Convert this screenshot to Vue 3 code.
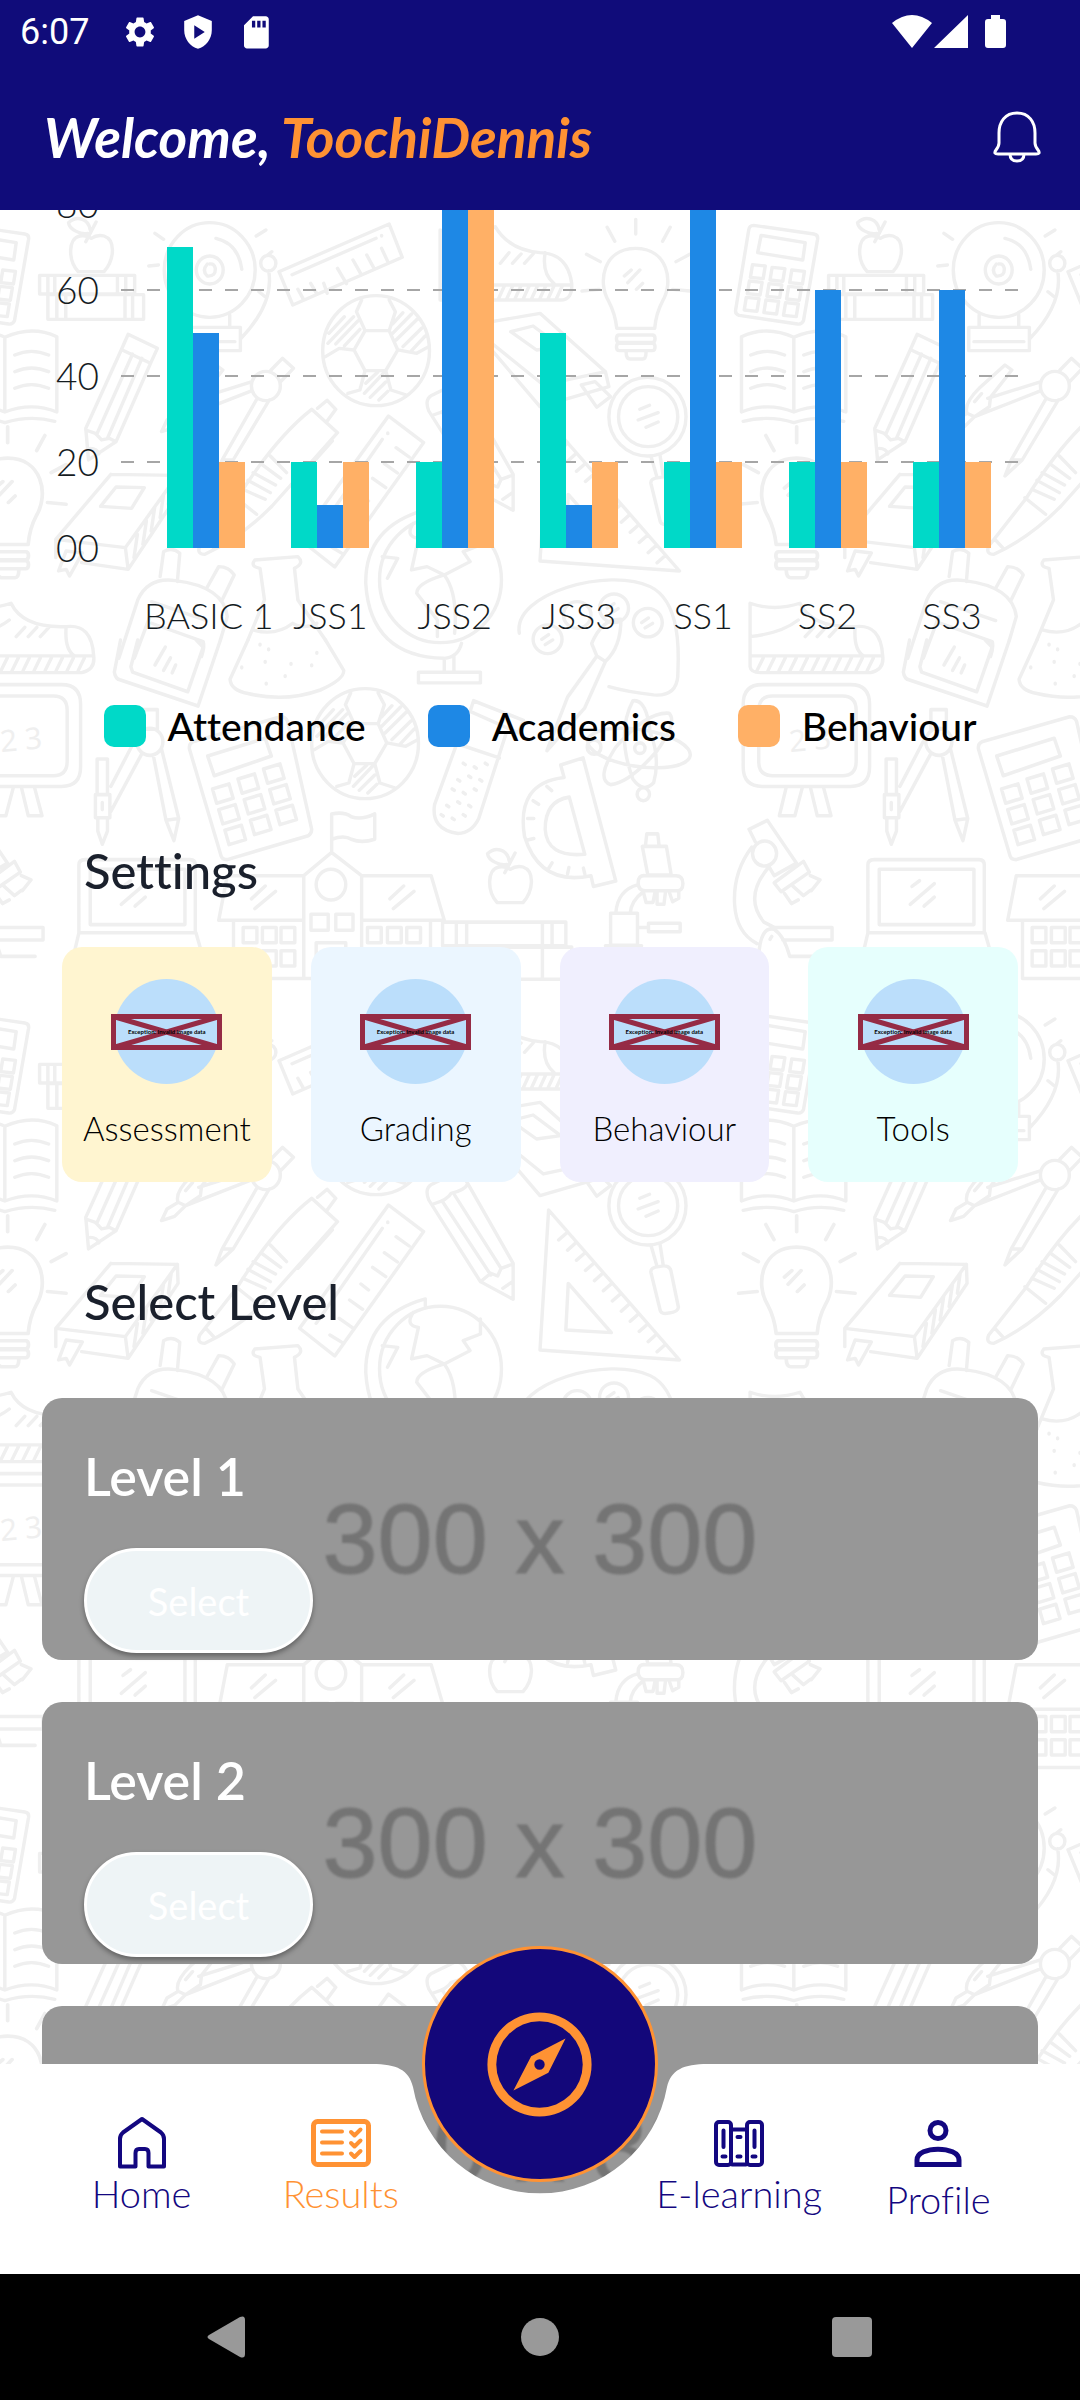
<script setup>
const ticks = ['80', '60', '40', '20', '00']
const maxValue = 80

const classes = [
  { name: 'BASIC 1', scores: [70, 50, 20] },
  { name: 'JSS1', scores: [20, 10, 20] },
  { name: 'JSS2', scores: [20, 80, 80] },
  { name: 'JSS3', scores: [50, 10, 20] },
  { name: 'SS1', scores: [20, 80, 20] },
  { name: 'SS2', scores: [20, 60, 20] },
  { name: 'SS3', scores: [20, 60, 20] },
]

const series = [
  { name: 'Attendance', tone: 'teal' },
  { name: 'Academics', tone: 'blue' },
  { name: 'Behaviour', tone: 'peach' },
]

const settings = [
  { name: 'Assessment', tone: 'cream' },
  { name: 'Grading', tone: 'sky' },
  { name: 'Behaviour', tone: 'lilac' },
  { name: 'Tools', tone: 'mint' },
]

const levels = [{ name: 'Level 1' }, { name: 'Level 2' }, { name: '' }]

// Wallpaper: one tile of school doodles, repeated in both directions.
const tileSize = 789
const tiles = []
for (let row = -1; row <= 2; row++) {
  for (let col = -1; col <= 1; col++) {
    tiles.push({ x: col * tileSize, y: row * tileSize })
  }
}

const steps = (count, make) => Array.from({ length: count }, (_, i) => make(i)).join(' ')
const grid3 = (make) => steps(9, (i) => make(i % 3, Math.floor(i / 3)))

const bulb =
  'M223 385Q218 340 200 305C165 245 185 145 278 145C370 145 390 245 355 305Q337 340 333 385Z M230 405h96q8 0 8 11t-8 11h-96q-8 0-8-11t8-11z M230 430h96q8 0 8 11t-8 11h-96q-8 0-8-11t8-11z M250 455q0 22 12 22h36q10 0 10-22 M278 58v44 M195 82l22 42 M378 82l-22 42 M135 163l40 22 M435 163l-40 22 M122 273l50-5 M435 273l-50-5 M245 228l20-18 M255 248l35-38 M280 268l18-18'
const apple =
  'M950 215C920 180 920 115 955 108Q975 105 988 115Q1005 103 1025 108C1060 120 1055 180 1025 215Z M972 125Q990 90 1002 66 M978 100C960 105 925 90 922 68C945 45 980 55 985 90'
const ball =
  'M937 452a155 165 0 1 0 310 0a155 165 0 1 0-310 0 M1060 392H1130L1155 450L1120 512H1060L1028 450Z M1060 392L1035 335L1050 300 M1130 392L1148 335L1130 300 M1155 450L1210 460L1245 440 M1120 512L1135 570L1180 585 M1060 512L1045 570L1010 580 M1028 450L985 445L945 470 M955 400l45-50 M952 430l75-80 M975 432l65-70 M1000 438l45-50 M1140 372l30-34 M1140 400l55-58 M1150 420l65-66 M1170 440l55-56 M1195 452l40-44 M1062 550l35-34 M1058 580l55-60 M1075 592l45-46 M1100 600l26-26'

const upper = [
  bulb,
  'M620 76L795 102Q808 104 806 118L765 362Q760 374 748 372L578 346Q566 342 568 330L606 90Q608 76 620 76Z M642 106L770 128L763 180L632 158Z ' +
    grid3((c, r) => `M${617 + c * 57 - r * 9} ${194 + c * 8 + r * 49}l37 4l-6 38l-37-4z`),
  apple,
  'M838 226h276v56h-276z M862 226v56 M882 226v56 M1064 226v56 M1088 226v56 M862 284h278v74h-278z M888 284v74 M914 284v74 M1086 284v74 M1108 284v74',
  'M1200 210a132 142 0 1 0 264 0a132 142 0 1 0-264 0 M1293 210a39 42 0 1 0 78 0a39 42 0 1 0-78 0 M1325 192Q1308 212 1325 228Q1350 230 1348 205Q1345 190 1332 192 M1350 115Q1415 130 1425 208 M1275 345v36 M1390 345v36 M1245 382h176v70h-176z M1260 425h145 M1423 415Q1520 310 1503 212 M1480 190a22 24 0 1 0 44 0a22 24 0 1 0-44 0 M1500 165l12-10 M1173 100l25 18 M1495 90l-28 18 M1155 198l28-3 M1475 275l18 15',
  'M585 410Q660 375 737 412Q815 375 888 410V636Q815 605 737 636Q660 605 585 636Z M737 412V636 M590 664Q665 645 737 668Q810 645 882 664 ' +
    steps(6, (i) => `M${612 + (i % 2) * 154} ${465 + Math.floor(i / 2) * 50}q48-22 98 0`),
  'M1095 403L1180 445L1160 490L1060 725L980 780L972 685L1075 450Z M1078 450L1160 490 M1108 462L1005 700 M1135 475L1035 715 M972 690L1000 700L1018 720L1040 715L1060 725 M985 745Q1005 745 1010 762',
  'M1453 558a42 44 0 1 0 84 0a42 44 0 1 0-84 0 M1510 510L1543 475L1575 505L1538 545 M1455 545L1300 595 M1455 572L1262 650 M1350 495L1370 510L1308 592L1305 620L1262 650L1240 640Q1230 610 1275 565Z M1240 640L1208 660L1192 695L1230 682L1262 650 M1262 605l20-24 M1470 595L1368 780L1350 828L1400 780L1505 600 M1368 780L1400 780',
  'M200 650a112 118 0 1 0 224 0a112 118 0 1 0-224 0 M228 650a86 90 0 1 0 172 0a86 90 0 1 0-172 0 M322 768l18 65 M348 762l10 68 M322 850Q320 835 345 833Q375 825 380 845L402 955Q400 970 375 972Q350 978 348 960Z M290 628l28-12 M285 660l58-22 M308 682l35-16',
  'M-290 90Q-180 120-130 80Q-90 150 0 158Q80 160 92 250Q95 300 60 300H-290Z M-290 255H88 M15 158Q5 220 40 250 M-115 190l25-32 M-80 190l25-28 M-45 190l25-28 ' +
    steps(8, (i) => `M${-120 + i * 24} 295l16-36`),
  'M-140 365L0 340L190 515L200 560L0 620L-140 450 M190 515L10 555L-140 430 M-85 395L-20 378L60 440L-10 450Z M120 555L160 545L205 590L165 622Z',
  'M-60 1300C-80 1180 200 1100 320 1160C420 1210 400 1400 400 1430Q395 1490 330 1485Q250 1475 200 1460 M173 1225a42 43 0 1 0 84 0a42 43 0 1 0-84 0 M271 1268a42 43 0 1 0 84 0a42 43 0 1 0-84 0 M-20 1318a42 43 0 1 0 84 0a42 43 0 1 0-84 0 M68 1245a40 40 0 1 0 80 0a40 40 0 1 0-80 0 M195 1225l20-14 M205 1240l22-14 M295 1268l20-14 M305 1284l22-14 M5 1318l20-14 M15 1334l22-14',
  'M610 1210V1400Q612 1418 640 1418H960Q1000 1410 995 1368H610 M610 1210Q680 1235 755 1210Q790 1285 915 1280Q990 1270 995 1368 M915 1280Q910 1350 940 1368 M610 1310Q700 1300 750 1260 M770 1310l25-28 M805 1310l25-28 M840 1310l25-28 ' +
    steps(11, (i) => `M${630 + i * 32} 1412l18-38`),
]

const upperLeft = [
  'M810 215L1130 72L1168 172L850 315Z M848 224L1092 115 M1108 106v2 M865 268l15 28 M902 250l16 28 M940 250l10 30 M980 205l26 46 M1025 180l22 40 M1065 165l20 38 M1108 145l18 40',
  'M1102 1140a177 188 0 1 0 354 0a177 188 0 1 0-354 0 M1235 930Q1060 980 1062 1150Q1075 1370 1290 1375Q1330 1372 1340 1330 M1290 1375V1415 M1318 1370V1415 M1215 1417h180v32h-180z M1235 930v24 M1200 970Q1175 1010 1215 1015L1195 1110L1240 1100L1290 1125L1365 1085L1345 1055L1395 1035V990 M1290 1125Q1210 1150 1210 1180L1270 1260V1310 M1290 1125Q1330 1180 1320 1300 M1110 1070L1155 1075L1125 1135',
  'M465 1130L475 1055Q500 1040 522 1060L515 1145 M600 1165L635 1100Q665 1100 680 1125L645 1200 M345 1375L400 1200Q430 1130 510 1142Q650 1160 660 1250L640 1320 M390 1375L435 1250 M440 1205L600 1262 M440 1270L590 1325Q595 1340 585 1370',
  'M740 1080L865 1070Q885 1090 855 1105L865 1200L945 1320 M740 1080Q725 1100 755 1105L768 1200L720 1320 M735 1290Q800 1310 850 1270Q880 1290 920 1270',
]

const middle = [
  'M350 0L332 90Q335 110 350 112L575 185L640 0 M400 0L380 75L385 90L545 145L590 20L570 0 M450 70l30-50 M475 85l20-35 M500 92l10-22',
  'M720 0L668 110Q670 140 720 150Q830 175 930 140Q1000 110 998 85L945 0 M755 12v2 M780 25v2 M770 60v2 M845 66v2 M905 70v2 M920 35v2 M828 100v2 M773 121v2 M702 76v2',
  'M560 285L815 215Q830 215 835 228L905 530Q905 542 895 548L660 615Q645 615 642 605L550 305Q548 290 560 285Z M603 325L770 275L788 325L622 380Z ' +
    grid3((c, r) => `M${617 + c * 74 + r * 18} ${417 + c * -28 + r * 58}l48-14l12 40l-48 14z`),
  'M1365 200L1375 170L1520 225L1505 260Z M1355 215L1262 460Q1250 530 1330 542Q1370 540 1390 500L1470 260 M1325 290L1450 330 ' +
    steps(15, (i) => `M${1345 + (i % 3) * 32 - Math.floor(i / 3) * 16} ${345 + Math.floor(i / 3) * 36 + (i % 2) * 10}l6 4`),
  'M963 590V487Q1000 480 1020 495Q1050 505 1088 487V558Q1050 570 1020 558Q1000 545 963 558 M882 660L963 595L1050 660V948H882Z M882 660H660L635 785H880 M1050 660H1252L1290 785H1050 M678 785V948H880 M1250 785V948H1050 M918 685a43 43 0 1 0 86 0a43 43 0 1 0-86 0 M903 768h50v45h-50z M975 768h50v45h-50z M918 948V848h86V948 M730 725l40-36 M740 752l60-48 M1132 725l40-36 M1142 752l60-48 ' +
    steps(12, (i) => `M${[706, 762, 816, 1067, 1125, 1181][i % 6]} ${i < 6 ? 805 : 870}h40v43h-40z`),
  'M1285 790h358v66h-358z M1325 790v66 M1355 790v66 M1575 790v66 M1603 790v66 M1345 860h315v90h-315z M1575 860v90',
]

const middleRight = [
  'M235 -58Q180 -60 150 10L165 45L80 160L20 310L130 190L190 60Q235 20 235-58Z M165 45L190 60',
  'M60 350L125 330L220 675L155 690L148 660Q0 690-45 550Q-70 400 70 385Z M85 440L130 600Q20 610 15 530Q15 450 85 440Z M20 410l14 12 M-20 450l16 10 M-36 500h18 M-36 560l18-4 M25 640l10-16 M80 655l4-18 M130 655l-4-16',
  'M145 300a145 50 8 1 0 285 5a145 50 8 1 0-285-5 M270 170Q310 165 320 260Q350 330 330 400Q300 430 270 390Q220 260 270 170Z M375 205Q400 230 340 310Q260 400 205 405Q160 390 220 300Q310 200 375 205Z M137 300a20 20 0 1 0 40 0a20 20 0 1 0-40 0 M282 432a18 18 0 1 0 36 0a18 18 0 1 0-36 0 M275 303a15 15 0 1 0 30 0a15 15 0 1 0-30 0',
  'M645 125H902Q957 125 957 180V355Q957 410 902 410H645Q590 410 590 355V180Q590 125 645 125Z M675 157H878Q918 157 918 197V340Q918 380 878 380H675Q635 380 635 340V197Q635 157 675 157Z M715 412l-20 80h45l22-80 M785 412l20 80h40l-22-80',
  'M1135 195h45v55h-45z M1120 285a38 38 0 1 0 76 0a38 38 0 1 0-76 0 M1115 280L1045 410 M1135 318L1045 480 M1168 322L1205 505L1228 562L1242 500L1192 305 M1205 505L1242 500 M1005 333h30v100h-30z M1000 433h42v65h-42z M1007 500v35L1020 572L1035 535V500 M1020 455v20',
  'M310 543h32l4 35h-40z M297 578h70l14 80h-68z M305 660h90q20 0 20 22t-20 20h-90q-20 0-20-22t20-20z M300 705l8 30h20l6-28 M340 705v35h20l4-32 M375 705l10 28l18-10v-20 M285 685Q225 700 220 765 M300 705Q265 730 262 765 M205 765h78v90h-78z M285 805h30 M315 793h92v24h-92z M190 856h105',
  'M607 530L660 505L745 625L680 660L665 635 M617 598a35 35 0 1 0 70 0a35 35 0 1 0-70 0 M615 580Q560 650 565 740Q570 820 630 850 M665 635Q590 720 650 790L680 805 M680 680L765 620L782 650L700 705Z M710 710l20 28l20-10 M735 690l30 26l20-15 M785 660l28 12l-25 30 M607 530L625 565 M680 805h168v35H705 M635 886Q640 800 680 810Q710 830 725 886h100 M668 838l5-8',
  'M952 820V630Q952 615 970 615H1275Q1290 615 1290 630V820 M985 642h275v155h-275z M952 820h340l15 50 M952 820l-12 50 M1080 690l22-16 M1075 740l70-58 M1115 745l30-25',
]

const lower = [
  'M25 90L405 540L0 510Z M82 310L207 458L75 450Z ' +
    steps(12, (i) => `M${54 + i * 26} ${180 + i * 30.5}l24-22`),
  'M1045 250L1238 253L1240 310L1095 535L960 515 M885 500V445L1045 250 M885 445L1087 470L1238 253 M1087 470L1095 535 M1060 288L1142 290L1105 352L1015 346Z M915 480L962 486L925 555L915 535L893 540Z M1112 500l10-70 M1138 460l10-70 M1162 420l10-70 M1188 380l10-70 M1212 340l8-60',
]

const lowerLeft = [
  'M905 55L980 125L790 345Q700 440 595 490Q570 490 580 465L690 320Q800 140 905 55Z M922 52L950 28L975 55L950 90 M785 195L832 245 M760 220L815 262 M735 245L800 282 M720 268L785 305 M705 295L770 325 M685 320L745 370 M598 445L622 472 M965 150L865 265',
  'M1128 75L1230 155L972 528L870 445Z M1110 145L918 430 M1126 126v2 M1150 170l38 28 M1116 218l38 28 M1082 262l38 28 M1048 312l22 18 M1015 360l38 28 M985 415l38 28 M958 465l35 22',
  'M1245 60Q1230 20 1260 10L1320-20Q1340-25 1355 5L1490 250V358L1395 305Z M1258 72Q1300 60 1310 40Q1350 30 1358 12 M1285 65L1425 285 M1320 45L1455 265 M1395 305L1425 280L1445 288L1455 265L1490 252 M1460 325l28-20',
]
</script>

<template>
  <div class="app">
    <header class="top">
      <div class="status">
        <span class="clock">6:07</span>
        <svg class="s-icon" viewBox="0 0 24 24" aria-hidden="true">
          <path fill="#fff" fill-rule="evenodd" d="M19.14 12.94c.04-.3.06-.61.06-.94s-.02-.64-.07-.94l2.03-1.58c.18-.14.23-.41.12-.61l-1.92-3.32c-.12-.22-.37-.29-.59-.22l-2.39.96c-.5-.38-1.03-.7-1.62-.94L14.4 2.81c-.04-.24-.24-.41-.48-.41h-3.84c-.24 0-.43.17-.47.41L9.25 5.35c-.59.24-1.13.57-1.62.94l-2.39-.96c-.22-.08-.47 0-.59.22L2.74 8.87c-.12.21-.08.47.12.61l2.03 1.58c-.05.3-.09.63-.09.94s.02.64.07.94l-2.03 1.58c-.18.14-.23.41-.12.61l1.92 3.32c.12.22.37.29.59.22l2.39-.96c.5.38 1.03.7 1.62.94l.36 2.54c.05.24.24.41.48.41h3.84c.24 0 .44-.17.47-.41l.36-2.54c.59-.24 1.13-.56 1.62-.94l2.39.96c.22.08.47 0 .59-.22l1.92-3.32c.12-.22.07-.47-.12-.61l-2.01-1.58zM12 15.6c-1.98 0-3.6-1.62-3.6-3.6s1.62-3.6 3.6-3.6 3.6 1.62 3.6 3.6-1.62 3.6-3.6 3.6z" />
        </svg>
        <svg class="s-icon" viewBox="0 0 24 24" aria-hidden="true">
          <path fill="#fff" fill-rule="evenodd" d="M12 .8L2.8 4.6v6.2c0 5.7 3.9 10.9 9.2 12.4 5.3-1.5 9.2-6.7 9.2-12.4V4.6zM9.5 7.5l7 4.5-7 4.5z" />
        </svg>
        <svg class="s-icon" viewBox="0 0 24 24" aria-hidden="true">
          <path fill="#fff" fill-rule="evenodd" d="M18.5 1.5h-8.5L4 7.5v13.5c0 1.1.9 2 2 2h12.5c1.1 0 2-.9 2-2V3.5c0-1.1-.9-2-2-2zM11.5 9h-2.2V4.5h2.2zM15 9h-2.2V4.5H15zM18.5 9h-2.2V4.5h2.2z" />
        </svg>
        <svg class="signals" viewBox="0 0 116 36" aria-hidden="true">
          <path fill="#fff" d="M20 34L0 9Q20-7 40 9Z M76 1V34H42Z" />
          <path fill="#fff" d="M99 1h9v4h3q3 0 3 3v23q0 3-3 3h-15q-3 0-3-3V8q0-3 3-3h3z" />
        </svg>
      </div>
      <div class="bar">
        <h1 class="welcome">Welcome, <span class="user">ToochiDennis</span></h1>
        <button class="bell" type="button" aria-label="Notifications">
          <svg viewBox="0 0 48 52" fill="none" stroke="#fff" stroke-width="3" stroke-linejoin="round">
            <path d="M24 2C12 2 6 11 6 22V32Q6 35 3 39Q0 43 5 43H43Q48 43 45 39Q42 35 42 32V22C42 11 36 2 24 2Z" />
            <path d="M17 43q0 7 7 7t7-7" />
          </svg>
        </button>
      </div>
    </header>

    <div class="stage">
      <main class="content">
        <svg class="wallpaper" aria-hidden="true">
          <defs>
            <g id="doodles" fill="none" stroke="#efefef" stroke-width="10" stroke-linecap="round" stroke-linejoin="round">
              <g transform="translate(540 -10) scale(.3444 .3333)">
                <path v-for="(d, i) in upper" :key="i" :d="d" />
                <path :d="bulb" transform="translate(445 618) scale(1.08)" />
              </g>
              <g transform="translate(0 -10) scale(.3444 .3333)">
                <path v-for="(d, i) in upperLeft" :key="i" :d="d" />
                <path :d="ball" />
              </g>
              <path :d="ball" transform="translate(-11 383) scale(.3444 .3333)" />
              <path :d="apple" transform="translate(170 621) scale(.3444 .3333)" />
              <g transform="translate(0 430) scale(.3444 .3571)">
                <path v-for="(d, i) in middle" :key="i" :d="d" />
              </g>
              <g transform="translate(540 430) scale(.3444 .3571)">
                <path v-for="(d, i) in middleRight" :key="i" :d="d" />
              </g>
              <text class="chalk" x="790" y="542" transform="rotate(-5 790 542)">2 3</text>
              <g transform="translate(540 970) scale(.3444 .3333)">
                <path v-for="(d, i) in lower" :key="i" :d="d" />
              </g>
              <g transform="translate(0 970) scale(.3444 .3333)">
                <path v-for="(d, i) in lowerLeft" :key="i" :d="d" />
              </g>
            </g>
          </defs>
          <use v-for="t in tiles" :key="t.x + ':' + t.y" href="#doodles" :x="t.x" :y="t.y" />
        </svg>

        <section class="chart" aria-label="Class performance">
          <div class="plot">
            <div v-for="t in ticks" :key="t" class="tick">
              <span class="tick-label">{{ t }}</span>
              <span class="tick-line" :class="{ base: t === '00' }"></span>
            </div>
            <div class="bars">
              <div v-for="c in classes" :key="c.name" class="group">
                <span
                  v-for="(v, i) in c.scores"
                  :key="i"
                  class="column"
                  :class="series[i].tone"
                  :style="{ height: (v / maxValue) * 100 + '%' }"
                ></span>
              </div>
            </div>
          </div>
          <div class="x-axis">
            <span v-for="c in classes" :key="c.name" class="x-label">{{ c.name }}</span>
          </div>
          <ul class="legend">
            <li v-for="s in series" :key="s.name">
              <span class="swatch" :class="s.tone"></span>{{ s.name }}
            </li>
          </ul>
        </section>

        <h2 class="title settings-title">Settings</h2>
        <div class="settings">
          <button v-for="s in settings" :key="s.name" class="setting" :class="s.tone" type="button">
            <span class="badge">
              <span class="broken">
                <svg viewBox="0 0 111 36" fill="none" stroke="#952b45" stroke-width="5" aria-hidden="true">
                  <path d="M2.5 2.5H108.5V33.5H2.5ZL108.5 33.5M108.5 2.5L2.5 33.5" />
                </svg>
                <span class="broken-text">Exception: Invalid image data</span>
              </span>
            </span>
            <span class="setting-name">{{ s.name }}</span>
          </button>
        </div>

        <h2 class="title levels-title">Select Level</h2>
        <div class="levels">
          <article v-for="(l, i) in levels" :key="i" class="level">
            <span class="placeholder">300 x 300</span>
            <template v-if="l.name">
              <h3 class="level-name">{{ l.name }}</h3>
              <button class="select" type="button">Select</button>
            </template>
          </article>
        </div>
      </main>

      <nav class="tabs" aria-label="Main">
        <div class="tabs-shape" aria-hidden="true">
          <span class="side"></span>
          <svg class="notch" viewBox="0 0 336 210">
            <path fill="#fff" d="M0 0C25 0 37 6 41 23A129 129 0 0 0 295 23C299 6 311 0 336 0V210H0Z" />
          </svg>
          <span class="side"></span>
        </div>
        <a class="tab" href="#home">
          <svg class="tab-icon" viewBox="0 0 48 52" fill="none" stroke="#130780" stroke-width="4" stroke-linejoin="round" aria-hidden="true">
            <path d="M24 2L5 15.5Q2 18 2 22V49.5H17.5V36Q17.5 32 21 32H27Q30.5 32 30.5 36V49.5H46V22Q46 18 43 15.5Z" />
          </svg>
          Home
        </a>
        <a class="tab active" href="#results" aria-current="page">
          <svg class="tab-icon" viewBox="0 0 60 52" fill="none" stroke="#ff9233" stroke-width="4" stroke-linecap="round" stroke-linejoin="round" aria-hidden="true">
            <rect x="2.5" y="4.5" width="55" height="43" rx="4" stroke-width="5" />
            <path d="M11 14.5H31M11 25.5H31M11 36.5H31M40 15l3.5 3.5 6-6M40 26l3.5 3.5 6-6M40 36.5l3.5 3.5 6-6" />
          </svg>
          Results
        </a>
        <button class="fab" type="button" aria-label="Explore">
          <svg viewBox="0 0 24 24" aria-hidden="true">
            <path fill="#ff9233" fill-rule="evenodd" d="M12 2a10 10 0 1 0 0 20a10 10 0 1 0 0-20zM12 3.7a8.3 8.3 0 1 1 0 16.6a8.3 8.3 0 1 1 0-16.6z M17 7L13.7 13.6L7 17L10.4 10.4Z M12 11a1 1 0 1 0 0 2a1 1 0 1 0 0-2z" />
          </svg>
        </button>
        <a class="tab learning" href="#e-learning">
          <svg class="tab-icon" viewBox="0 0 50 52" fill="none" stroke="#130780" stroke-width="4" stroke-linecap="round" aria-hidden="true">
            <rect x="2" y="5" width="15" height="43" rx="3" />
            <rect x="33" y="5" width="15" height="43" rx="3" />
            <path d="M17 12.5H33M18 47.5H32M9.5 13.5V30M40.5 13.5V30M8.5 39.5h3M23.5 39.5h3M38.5 39.5h3M23.5 20h3" />
          </svg>
          E-learning
        </a>
        <a class="tab profile" href="#profile">
          <svg class="tab-icon" viewBox="0 0 48 52" fill="none" stroke="#130780" stroke-width="5" aria-hidden="true">
            <circle cx="24" cy="13.5" r="8" />
            <path d="M3 47.5V43C3 28.5 45 28.5 45 43V47.5Z" />
          </svg>
          Profile
        </a>
      </nav>
    </div>

    <footer class="system">
      <button type="button" aria-label="Back">
        <svg viewBox="0 0 42 42"><path fill="#999" d="M2 19L33 1Q38-1 38 4V38Q38 43 33 41L2 23Q-1 21 2 19Z" /></svg>
      </button>
      <button type="button" aria-label="Home screen">
        <svg viewBox="0 0 42 42"><circle cx="21" cy="21" r="19" fill="#999" /></svg>
      </button>
      <button type="button" aria-label="Recent apps">
        <svg viewBox="0 0 42 42"><rect x="1" y="1" width="40" height="40" rx="4" fill="#999" /></svg>
      </button>
    </footer>
  </div>
</template>

<style>
body {
  background: #fff;
}
</style>

<style scoped>
* {
  box-sizing: border-box;
}
.app {
  display: flex;
  flex-direction: column;
  height: 100vh;
  font-family: Lato, "Liberation Sans", sans-serif;
  font-variant-ligatures: none;
  color: #151c1f;
}
button {
  padding: 0;
  border: 0;
  background: none;
  font: inherit;
  color: inherit;
}
svg {
  display: block;
}
h1,
h2,
h3,
ul {
  margin: 0;
  padding: 0;
}

.top {
  background: #100c7a;
  color: #fff;
}
.status {
  display: flex;
  align-items: center;
  height: 64px;
  padding: 0 72px 0 20px;
  gap: 22px;
}
.clock {
  width: 80px;
  font: 36px/40px Roboto, sans-serif;
}
.s-icon {
  width: 36px;
  height: 36px;
}
.signals {
  width: 116px;
  height: 36px;
  margin-left: auto;
}
.bar {
  display: flex;
  align-items: center;
  justify-content: space-between;
  height: 146px;
  padding: 0 39px 0 44px;
}
.welcome {
  font-size: 55px;
  line-height: 60px;
  font-weight: 700;
  font-style: italic;
}
.user {
  color: #ff9233;
}
.bell svg {
  width: 48px;
  height: 52px;
}

.stage {
  display: grid;
  flex: 1;
  min-height: 0;
  grid-template-columns: 100%;
  grid-template-rows: 100%;
}
.content {
  grid-area: 1 / 1;
  position: relative;
  overflow: hidden;
}
.wallpaper {
  position: absolute;
  inset: 0;
  z-index: -1;
  width: 100%;
  height: 100%;
}
.chalk {
  fill: #efefef;
  stroke: none;
  font: 30px/1 "Noto Sans", sans-serif;
}

.plot {
  position: relative;
  display: flex;
  flex-direction: column;
  justify-content: space-between;
  height: 384px;
  margin-top: -26px;
  padding: 0 54px 0 42px;
}
.tick {
  display: flex;
  align-items: center;
  gap: 22px;
  height: 40px;
  font-size: 37px;
  line-height: 40px;
  font-weight: 300;
}
.tick-label {
  width: 57px;
  text-align: right;
}
.tick-line {
  flex: 1;
  height: 2px;
  background: repeating-linear-gradient(90deg, #a6a6a6 0 13px, transparent 13px 26px);
}
.tick-line.base {
  background: none;
}
.bars {
  position: absolute;
  inset: 20px 66px 20px 144px;
  display: flex;
}
.group {
  display: flex;
  flex: 1;
  align-items: flex-end;
  justify-content: center;
}
.column {
  width: 26px;
}
.teal {
  background: #00d9c8;
}
.blue {
  background: #1e88e5;
}
.peach {
  background: #ffb066;
}
.x-axis {
  display: flex;
  margin-top: 25px;
  padding: 0 66px 0 144px;
}
.x-label {
  flex: 1 1 0;
  min-width: 0;
  font-size: 36px;
  line-height: 44px;
  font-weight: 300;
  text-align: center;
  white-space: nowrap;
}
.legend {
  display: flex;
  justify-content: center;
  gap: 62px;
  margin-top: 68px;
  list-style: none;
  color: #000;
  font-size: 39px;
  line-height: 42px;
  font-weight: 500;
}
.legend li {
  display: flex;
  gap: 22px;
}
.swatch {
  width: 42px;
  height: 42px;
  border-radius: 10px;
}

.title {
  padding-left: 84px;
  font-size: 49px;
  line-height: 56px;
  font-weight: 500;
  color: #1a202c;
}
.settings-title {
  margin-top: 95px;
}
.settings {
  display: grid;
  grid-template-columns: repeat(4, 1fr);
  gap: 39px;
  margin-top: 49px;
  padding: 0 62px;
}
.setting {
  display: flex;
  flex-direction: column;
  align-items: center;
  height: 235px;
  padding-top: 32px;
  border-radius: 20px;
  color: #000;
}
.cream {
  background: #fff5d0;
}
.sky {
  background: #ebf6ff;
}
.lilac {
  background: #f0effe;
}
.mint {
  background: #e6fffd;
}
.badge {
  display: flex;
  align-items: center;
  justify-content: center;
  width: 105px;
  height: 105px;
  border-radius: 50%;
  background: #bbdefb;
}
.broken {
  display: grid;
  flex: none;
  align-items: center;
  justify-items: center;
  width: 111px;
}
.broken > * {
  grid-area: 1 / 1;
}
.broken svg {
  width: 111px;
  height: 36px;
}
.broken-text {
  font-size: 6px;
  line-height: 8px;
  font-weight: 700;
  white-space: nowrap;
}
.setting-name {
  margin-top: 24px;
  font-size: 33px;
  line-height: 40px;
  font-weight: 300;
}

.levels-title {
  margin-top: 91px;
}
.levels {
  display: flex;
  flex-direction: column;
  gap: 42px;
  margin-top: 69px;
  padding: 0 42px;
}
.level {
  position: relative;
  flex: none;
  height: 262px;
  padding: 48px 42px 0;
  border-radius: 20px;
  background: #979797;
  color: #fff;
}
.placeholder {
  position: absolute;
  inset: 83px 0 auto;
  font: 99px/116px "Liberation Sans", sans-serif;
  text-align: center;
  color: #747474;
  -webkit-text-stroke: 1px #747474;
  filter: blur(1px);
}
.level-name {
  position: relative;
  font-size: 52px;
  line-height: 60px;
  font-weight: 600;
}
.select {
  position: relative;
  display: block;
  width: 229px;
  height: 105px;
  margin-top: 42px;
  border: 3px solid #fff;
  border-radius: 53px;
  background: #eef4f6;
  box-shadow: 0 3px 5px rgba(0, 0, 0, 0.35);
  font-size: 38px;
  color: #fff;
}

.tabs {
  grid-area: 1 / 1;
  align-self: end;
  position: relative;
  display: grid;
  grid-template-columns: repeat(5, 1fr);
  height: 210px;
  padding: 0 42px;
}
.tabs-shape {
  position: absolute;
  inset: 0;
  display: flex;
}
.side {
  flex: 1;
  background: #fff;
}
.notch {
  width: 336px;
  height: 210px;
}
.tab {
  position: relative;
  display: flex;
  flex-direction: column;
  align-items: center;
  padding-top: 53px;
  font-size: 38px;
  line-height: 44px;
  font-weight: 300;
  color: #130780;
  text-decoration: none;
}
.tab-icon {
  height: 52px;
  margin-bottom: 2px;
}
.active {
  color: #ff9233;
}
.profile .tab-icon {
  margin-bottom: 8px;
}
.fab {
  position: relative;
  justify-self: center;
  display: flex;
  align-items: center;
  justify-content: center;
  width: 236px;
  height: 236px;
  margin: -118px -50px 0;
  border: 3px solid #ff9233;
  border-radius: 50%;
  background: #13077a;
}
.fab svg {
  width: 125px;
  height: 125px;
}

.system {
  display: grid;
  grid-template-columns: repeat(3, 1fr);
  justify-items: center;
  align-items: center;
  height: 126px;
  padding: 0 72px;
  background: #000;
}
.system svg {
  width: 42px;
  height: 42px;
}
</style>
